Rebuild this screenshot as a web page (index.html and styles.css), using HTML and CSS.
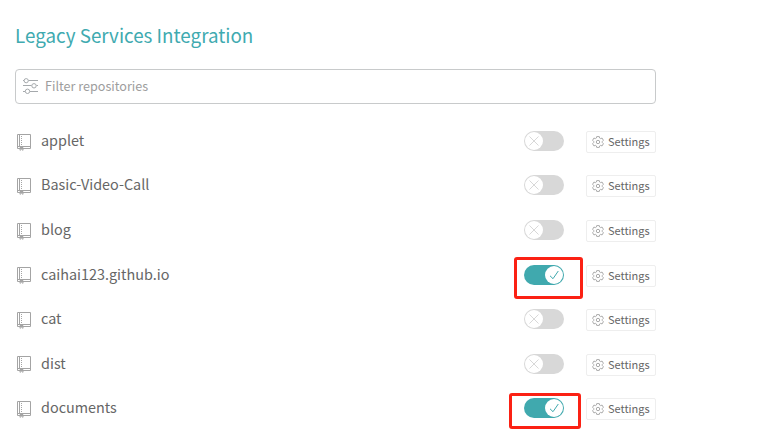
FILE: index.html
```
<!DOCTYPE html>
<html lang="en">
<head>
<meta charset="utf-8">
<title>Legacy Services Integration</title>
<link rel="stylesheet" href="styles.css">
</head>
<body>
<svg class="defs" width="0" height="0" aria-hidden="true">
  <symbol id="book" viewBox="0 0 15 18">
    <path d="M.5 1.5H13.5V15.5H.5ZM.5 13.5H13.5M2.5 1.5V13.5"/>
    <path d="M4.5 3V12" stroke-dasharray="1 1"/>
    <path d="M3 14.5H6V17.3L4.5 16.3L3 17.3Z"/>
  </symbol>
  <symbol id="gear" viewBox="0 0 12 12">
    <path d="M4.7 .6H7.3L7.7 2.1L8.5 2.6L10.1 2.1L11.4 4.3L10.3 5.4V6.6L11.4 7.7L10.1 9.9L8.5 9.4L7.7 9.9L7.3 11.4H4.7L4.3 9.9L3.5 9.4L1.9 9.9L.6 7.7L1.7 6.6V5.4L.6 4.3L1.9 2.1L3.5 2.6L4.3 2.1Z"/>
    <circle cx="6" cy="6" r="1.7"/>
  </symbol>
</svg>
<main class="page">
  <h1 class="title">Legacy Services Integration</h1>
  <label class="filter">
    <svg class="filter-icon" viewBox="0 0 16 16"><path d="M0 2.5H1M5.5 2.5H15M0 7.5H8.5M13.5 7.5H15M0 13.5H2M7 13.5H15"/><circle cx="3.2" cy="2.7" r="2.1"/><circle cx="11" cy="7.8" r="2.2"/><circle cx="4.5" cy="13.3" r="2.2"/></svg>
    <span class="placeholder">Filter repositories</span>
  </label>
  <ul class="repos">
    <li class="repo"><svg class="book"><use href="#book"/></svg><span class="name">applet</span><span class="switch"><span class="knob"><svg viewBox="0 0 18 18"><path d="M4.5 4.5L13.5 13.5M13.5 4.5L4.5 13.5"/></svg></span></span><a class="settings"><svg class="gear"><use href="#gear"/></svg><span>Settings</span></a></li>
    <li class="repo"><svg class="book"><use href="#book"/></svg><span class="name">Basic-Video-Call</span><span class="switch"><span class="knob"><svg viewBox="0 0 18 18"><path d="M4.5 4.5L13.5 13.5M13.5 4.5L4.5 13.5"/></svg></span></span><a class="settings"><svg class="gear"><use href="#gear"/></svg><span>Settings</span></a></li>
    <li class="repo"><svg class="book"><use href="#book"/></svg><span class="name">blog</span><span class="switch"><span class="knob"><svg viewBox="0 0 18 18"><path d="M4.5 4.5L13.5 13.5M13.5 4.5L4.5 13.5"/></svg></span></span><a class="settings"><svg class="gear"><use href="#gear"/></svg><span>Settings</span></a></li>
    <li class="repo"><svg class="book"><use href="#book"/></svg><span class="name">caihai123.github.io</span><span class="switch on"><span class="knob"><svg viewBox="0 0 18 18"><path d="M5 9.8L8 12.7L13.3 5"/></svg></span><i class="mark mark-a"></i></span><a class="settings"><svg class="gear"><use href="#gear"/></svg><span>Settings</span></a></li>
    <li class="repo"><svg class="book"><use href="#book"/></svg><span class="name">cat</span><span class="switch"><span class="knob"><svg viewBox="0 0 18 18"><path d="M4.5 4.5L13.5 13.5M13.5 4.5L4.5 13.5"/></svg></span></span><a class="settings"><svg class="gear"><use href="#gear"/></svg><span>Settings</span></a></li>
    <li class="repo"><svg class="book"><use href="#book"/></svg><span class="name">dist</span><span class="switch"><span class="knob"><svg viewBox="0 0 18 18"><path d="M4.5 4.5L13.5 13.5M13.5 4.5L4.5 13.5"/></svg></span></span><a class="settings"><svg class="gear"><use href="#gear"/></svg><span>Settings</span></a></li>
    <li class="repo"><svg class="book"><use href="#book"/></svg><span class="name">documents</span><span class="switch on"><span class="knob"><svg viewBox="0 0 18 18"><path d="M5 9.8L8 12.7L13.3 5"/></svg></span><i class="mark mark-b"></i></span><a class="settings"><svg class="gear"><use href="#gear"/></svg><span>Settings</span></a></li>
  </ul>
</main>
</body>
</html>
```
FILE: styles.css
```
* { box-sizing: border-box; }
body {
  margin: 0;
  background: #fff;
  color: #666;
  font-family: "Noto Sans CJK SC", "Open Sans", sans-serif;
  overflow: hidden;
}
svg { fill: none; stroke: currentColor; flex: none; }
.defs { display: block; }
.page { width: 656px; padding: 20px 0 0 15px; }
.title {
  margin: 0;
  height: 49px;
  line-height: 30px;
  font-size: 18.8px;
  font-weight: 400;
  color: #40aab0;
  white-space: nowrap;
}
.filter {
  display: flex;
  align-items: center;
  height: 35px;
  padding-left: 7px;
  border: 1px solid #c8cacb;
  border-radius: 4px;
}
.filter-icon { width: 16px; height: 16px; color: #a5a9ac; margin: -1px 6px 0 0; }
.placeholder { font-size: 12.6px; line-height: 20px; margin-top: -2px; color: #9d9d9d; }
.repos { list-style: none; margin: 14.63px 0 0; padding: 0; }
.repo { display: flex; align-items: center; height: 44.55px; padding-left: 2px; }
.book { width: 15px; height: 18px; color: #a4a4a4; margin: 1.5px 9px 0 0; }
.name { flex: 1; font-size: 14.4px; line-height: 22px; margin-top: -2px; }
.switch {
  position: relative;
  display: flex;
  width: 40px;
  height: 20px;
  padding: 1px;
  border-radius: 10px;
  background: #d8d8d8;
  color: #d8d8d8;
}
.switch.on { background: #40a9ae; color: #40a9ae; justify-content: flex-end; }
.knob { width: 18px; height: 18px; border-radius: 50%; background: #fff; }
.knob svg { display: block; width: 18px; height: 18px; }
.settings {
  display: flex;
  align-items: center;
  width: 70px;
  height: 22px;
  margin: 2px 0 0 22px;
  padding-left: 5px;
  border: 1px solid #eee;
  border-radius: 2px;
  font-size: 11px;
  line-height: 20px;
}
.settings span { margin-top: -2px; }
.gear { width: 12px; height: 12px; color: #aaa; margin-right: 4px; }
.mark { position: absolute; border: 3px solid #fb2114; border-radius: 3px; }
.mark-a { left: -10px; top: -8px; width: 69px; height: 42px; }
.mark-b { left: -15px; top: -5px; width: 72px; height: 36px; }
```
